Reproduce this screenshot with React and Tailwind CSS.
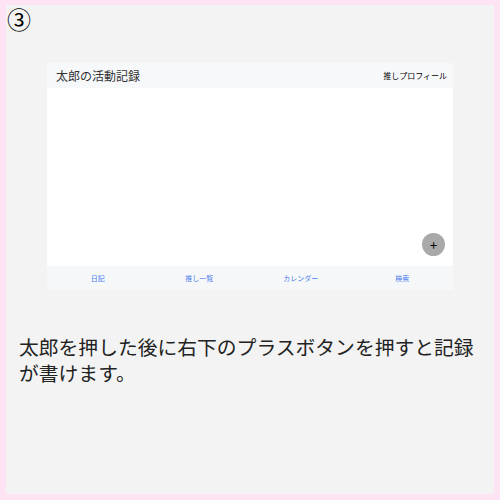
export default function App() {
  const tabs = ['日記', '推し一覧', 'カレンダー', '検索']

  return (
    <div className="w-[500px] h-[500px] bg-[#fde3f3] pt-[5px] px-[6px] pb-[6px] font-['Noto_Sans_CJK_JP',sans-serif]">
      <div className="w-full h-full bg-[#f3f3f3] flex flex-col">
        <div className="pl-[1px] h-[28px] text-[24px] leading-[28px] text-black">③</div>

        {/* app mock */}
        <div className="ml-[41px] mt-[30px] w-[406px] flex flex-col">
          <div className="h-[25px] bg-[#f7f8fa] flex items-center justify-between pl-[9px] pr-[6px]">
            <span className="text-[12px] text-[#333]">太郎の活動記録</span>
            <span className="text-[8px] text-black">推しプロフィール</span>
          </div>
          <div className="h-[178px] bg-white flex items-end justify-end pr-[8px] pb-[10px]">
            <div className="w-[23px] h-[23px] rounded-full bg-[#a9a9a9] flex items-center justify-center text-black text-[13px] leading-none">+</div>
          </div>
          <div className="h-[24px] bg-[#f6f7f9] grid grid-cols-4 items-center">
            {tabs.map(t => (
              <span key={t} className="text-center text-[7px] text-[#4a7cf0]">{t}</span>
            ))}
          </div>
        </div>

        <p className="mt-[44px] pl-[13px] pr-[8px] text-[19.8px] leading-[26px] text-[#222]">
          太郎を押した後に右下のプラスボタンを押すと記録が書けます。
        </p>
      </div>
    </div>
  )
}
